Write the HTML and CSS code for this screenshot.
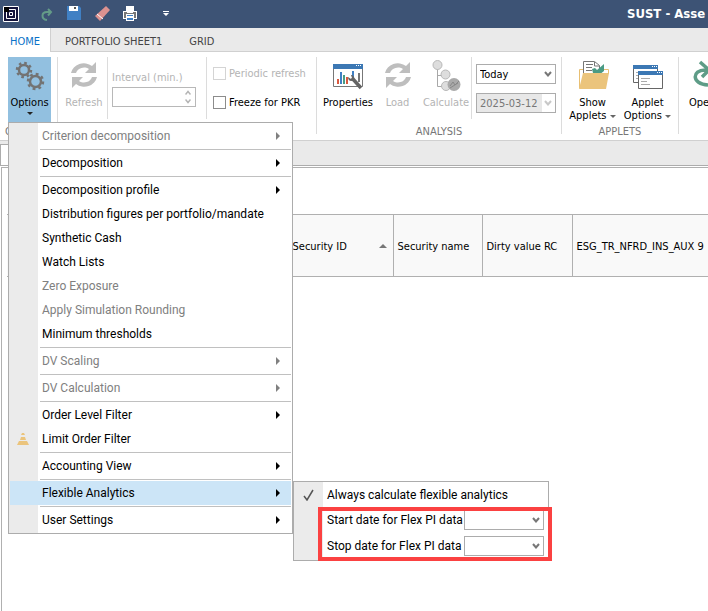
FILE: index.html
```html
<!DOCTYPE html>
<html lang="en">
<head>
<meta charset="utf-8">
<title>SUST</title>
<link rel="stylesheet" href="styles.css">
</head>
<body>
<svg class="defs" aria-hidden="true">
  <symbol id="refresh" viewBox="0 0 26 26">
    <path d="M0 11A13 12 0 0 1 21 4l4-4v11H14l4-4A8.500 8 0 0 0 5 11z"/>
    <path d="M26 15A13 12 0 0 1 5 22l-4 4V15h11l-4 4a8.500 8 0 0 0 13-4z"/>
  </symbol>
  <symbol id="chevron" viewBox="0 0 8 6"><path d="M1 1l3 3.500L7 1" fill="none" stroke="currentColor" stroke-width="2"/></symbol>
</svg>

<header class="titlebar">
  <svg class="logo" viewBox="0 0 16 16" aria-hidden="true"><path fill="#14143c" d="M0 0h16v16H0z"/><path fill="none" stroke="#fff" d="M.5.500h15v15H.5zM3.500 3.500h9v9h-9zM6.500 6.500h3v3h-3z"/><path fill="#000" d="M1 1h5v5H1z"/></svg>
  <button class="quick" aria-label="Redo"><svg viewBox="0 0 16 16"><path d="M9 14C3 13 3 6 9 6h4M10 3l3 3-3 3.500" fill="none" stroke="#649b88" stroke-width="2"/></svg></button>
  <button class="quick" aria-label="Save"><svg viewBox="0 0 16 16"><path fill="#4080c4" d="M1 0h12l2 2v12H1z"/><path fill="#fff" d="M3 0h9v5H3z"/><path fill="#555" d="M8 1h2v2H8z"/></svg></button>
  <button class="quick" aria-label="Erase"><svg viewBox="0 0 16 16"><path fill="#dc9290" d="M12 0l4 4-10 11-5-5z"/><path d="M3 8l6 5" stroke="#fff"/></svg></button>
  <button class="quick" aria-label="Print"><svg viewBox="0 0 14 16"><path fill="#fff" d="M3 0h8v5h3v8H0V5h3z"/><path fill="#777" d="M4 1h6v4H4zM1 6h12v6H1z"/><path fill="#fff" d="M4 1h6v6H4zM3 8h8v7H3z"/><path fill="#4080c4" d="M4 9h6v1H4zM4 12h6v2H4z"/></svg></button>
  <button class="quick quick-more" aria-label="Customize"><svg viewBox="0 0 6 6"><path fill="#fff" d="M0 0h6v1H0zM0 2h6L3 5z"/></svg></button>
  <h1 class="title">SUST - Asse</h1>
</header>

<nav class="tabs">
  <a class="tab tab-active" href="#home">HOME</a>
  <a class="tab" href="#sheet">PORTFOLIO SHEET1</a>
  <a class="tab" href="#grid">GRID</a>
</nav>

<section class="ribbon">
  <div class="group group-options">
    <div class="tools">
      <button class="tool tool-open">
        <svg class="icon" viewBox="0 0 32 32"><g fill="none" stroke="#737373"><circle cx="10" cy="10" r="5" stroke-width="2.500"/><circle cx="10" cy="10" r="7" stroke-width="2.500" stroke-dasharray="2.600 2.898"/><circle cx="21.500" cy="21.500" r="5.500" stroke-width="2.500"/><circle cx="21.500" cy="21.500" r="7.500" stroke-width="2.500" stroke-dasharray="2.800 3.090"/></g></svg>
        <span>Options</span><i class="drop"></i>
      </button>
    </div>
    <h2 class="caption">O</h2>
  </div>

  <div class="group group-refresh">
    <div class="tools">
      <button class="tool tool-refresh" disabled><svg class="icon icon-refresh"><use href="#refresh"/></svg><span>Refresh</span></button>
      <div class="part interval">
        <label for="interval">Interval (min.)</label>
        <div class="spin"><input id="interval" type="text" disabled><svg viewBox="0 0 6 14"><path d="M.5 4.500L3 1.500l2.500 3M.5 9.500l2.500 3 2.500-3" fill="none" stroke="#b4b4b4" stroke-width="1.500"/></svg></div>
      </div>
      <div class="part checks">
        <label class="check check-off"><input type="checkbox" disabled>Periodic refresh</label>
        <label class="check"><input type="checkbox">Freeze for PKR</label>
      </div>
    </div>
  </div>

  <div class="group">
    <div class="tools">
      <button class="tool tool-properties"><svg class="icon" viewBox="0 0 32 32"><path fill="#fff" stroke="#777" d="M1.500 5.500h29v21h-29z"/><path fill="#3c78b4" d="M1 4h30v5H1z"/><path fill="#fff" d="M24 5h1v1h-1zM26 5h1v1h-1zM28 5h1v1h-1z"/><path fill="#d9593f" d="M5 19h2v5H5zM14 17h2v7h-2z"/><path fill="#4080c4" d="M8 12h2v12H8zM20 11h2v6h-2z"/><path fill="#4a9b84" d="M11 15h2v9h-2z"/><path fill="#777" d="M26 13h2v9h-2z"/><path d="M20 18l9 10" stroke="#646464" stroke-width="3.500"/><path d="M16 17c0 4 3 5 6 3 1-3-1-5-3-5l1 3-1 1z" fill="#646464"/></svg><span>Properties</span></button>
      <button class="tool tool-load" disabled><svg class="icon icon-refresh"><use href="#refresh"/></svg><span>Load</span></button>
      <button class="tool tool-calculate" disabled><svg class="icon" viewBox="0 0 32 32"><path d="M7.500 6v20.500H17M7.500 15.500H13" fill="none" stroke="#a8a8a8"/><g fill="#ddd" stroke="#b8b8b8"><circle cx="7.500" cy="5" r="4.500"/><circle cx="15.500" cy="14.500" r="4.500"/><circle cx="16" cy="26" r="4.500"/></g><circle cx="24" cy="24.500" r="6.500" fill="#aaa"/><path d="M20 26l3-4 2 3 4-4M20 28l8-5" fill="none" stroke="#888"/></svg><span>Calculate</span></button>
      <div class="part dates">
        <div class="combo"><select aria-label="Period"><option>Today</option></select><svg><use href="#chevron"/></svg></div>
        <div class="combo combo-off"><select aria-label="Date" disabled><option>2025-03-12</option></select><svg><use href="#chevron"/></svg></div>
      </div>
    </div>
    <h2 class="caption">ANALYSIS</h2>
  </div>

  <div class="group group-applets">
    <div class="tools">
      <button class="tool tool-applet"><svg class="icon" viewBox="0 0 32 32"><path fill="#fff" stroke="#e8bf72" d="M2.500 28V9.500H6M23 9.500h8.500V14"/><path fill="#fff" stroke="#777" d="M6.500 15V1.500h11l5 4V15z"/><path d="M9 4.500h7M9 7.500h6M9 10.500h6M17.500 2v4h5" fill="none" stroke="#777"/><path fill="#4a9b84" d="M15 9l3-1 2 2 7-6v7l-5 4h-8l2-2z"/><path fill="#ebc47c" d="M6 13h26l-3 16H2z"/></svg><span>Show<br>Applets <i class="drop"></i></span></button>
      <button class="tool tool-applet"><svg class="icon" viewBox="0 0 32 32"><path fill="#fff" stroke="#666" d="M1.500 5.500h24v17h-24z"/><path fill="#3c78b4" d="M1 5h25v4H1z"/><path fill="#fff" d="M20 6h1v1h-1zM22 6h1v1h-1zM24 6h1v1h-1z"/><path d="M4 12.500h6M4 15.500h4M4 18.500h3" stroke="#aaa"/><path fill="#fff" stroke="#666" d="M6.500 11.500h24v17h-24z"/><path fill="#3c78b4" d="M6 11h25v4H6z"/><path fill="#fff" d="M25 12h1v1h-1zM27 12h1v1h-1zM29 12h1v1h-1z"/><path d="M9 18.500h9M9 21.500h6M9 24.500h9" stroke="#aaa"/></svg><span>Applet<br>Options <i class="drop"></i></span></button>
    </div>
    <h2 class="caption">APPLETS</h2>
  </div>

  <div class="group group-last">
    <div class="tools">
      <button class="tool tool-last"><svg class="icon" viewBox="0 0 32 32"><path d="M16 25C-1 24 0 10 13 10h6M8 2l9 8-7 7" fill="none" stroke="#5e9c87" stroke-width="3.500"/></svg><span>Ope</span></button>
    </div>
  </div>
</section>

<div class="sheetbar"><div class="sheet"></div></div>

<main class="document">
  <table class="grid">
    <colgroup><col class="col-first"><col class="col-id"><col class="col-name"><col class="col-value"><col></colgroup>
    <thead><tr><th></th><th><span class="sorted">Security ID<i></i></span></th><th>Security name</th><th>Dirty value RC</th><th>ESG_TR_NFRD_INS_AUX 9</th></tr></thead>
  </table>
</main>

<ul class="menu">
  <li><button class="item sub" disabled>Criterion decomposition</button></li>
  <li class="rule"><button class="item sub">Decomposition</button></li>
  <li class="rule"><button class="item sub">Decomposition profile</button></li>
  <li><button class="item">Distribution figures per portfolio/mandate</button></li>
  <li><button class="item">Synthetic Cash</button></li>
  <li><button class="item">Watch Lists</button></li>
  <li><button class="item" disabled>Zero Exposure</button></li>
  <li><button class="item" disabled>Apply Simulation Rounding</button></li>
  <li><button class="item">Minimum thresholds</button></li>
  <li class="rule"><button class="item sub" disabled>DV Scaling</button></li>
  <li class="rule"><button class="item sub" disabled>DV Calculation</button></li>
  <li class="rule"><button class="item sub">Order Level Filter</button></li>
  <li><button class="item"><svg class="mark cone" viewBox="0 0 12 12"><path fill="#ebc47c" d="M5 0h2l1 2H4zM4 4h4l1 3H3zM2 8h8l2 4H0z"/></svg>Limit Order Filter</button></li>
  <li class="rule"><button class="item sub">Accounting View</button></li>
  <li class="rule parent">
    <button class="item sub item-active">Flexible Analytics</button>
    <ul class="menu submenu">
      <li><button class="item"><svg class="mark" viewBox="0 0 12 12"><path d="M1 7l3 4 6-10" fill="none" stroke="#555" stroke-width="1.500"/></svg>Always calculate flexible analytics</button></li>
      <li class="field"><label for="start">Start date for Flex PI data</label><div class="combo"><select id="start"><option></option></select><svg><use href="#chevron"/></svg></div></li>
      <li class="field"><label for="stop">Stop date for Flex PI data</label><div class="combo"><select id="stop"><option></option></select><svg><use href="#chevron"/></svg></div></li>
      <li class="highlight" aria-hidden="true"></li>
    </ul>
  </li>
  <li class="rule"><button class="item sub">User Settings</button></li>
</ul>
</body>
</html>
```
FILE: styles.css
```css
* { box-sizing: border-box; }
body {
  margin: 0;
  height: 100vh;
  display: flex;
  flex-direction: column;
  position: relative;
  overflow: hidden;
  background: #fff;
  color: #000;
  font: 11px/13px Tahoma, "DejaVu Sans Condensed", "Open Sans", sans-serif;
  white-space: nowrap;
}
button, input, select { font: inherit; color: inherit; }
button { border: 0; padding: 0; background: none; }
ul { list-style: none; margin: 0; padding: 0; }
h1, h2 { margin: 0; font: inherit; }
svg { display: block; flex: none; }
.defs { position: absolute; width: 0; height: 0; }

.titlebar {
  flex: none;
  height: 28px;
  display: flex;
  align-items: center;
  gap: 12px;
  padding-left: 3px;
  background: #3d5375;
}
.logo { width: 16px; height: 16px; margin-right: 7px; }
.quick { width: 16px; display: flex; justify-content: center; }
.quick svg { width: 16px; height: 16px; }
.quick-more { margin-left: 8px; }
.quick-more svg { width: 6px; height: 6px; }
.title {
  margin-left: auto;
  width: 81px;
  overflow: hidden;
  color: #fff;
  font: bold 13px/16px Tahoma, "DejaVu Sans Condensed", sans-serif;
}

.tabs {
  flex: none;
  height: 24px;
  display: flex;
  background: #eaeaea;
  border-bottom: 1px solid #d0d0d0;
}
.tab { padding: 7px 14px 0 13px; color: #444; text-decoration: none; }
.tab-active {
  height: 24px;
  padding: 7px 10px 0 10px;
  margin-right: 1px;
  background: #fff;
  border-right: 1px solid #d0d0d0;
  color: #0a72c8;
}

.ribbon {
  flex: none;
  height: 89px;
  display: flex;
  padding-top: 5px;
  border-bottom: 1px solid #d0d0d0;
}
.group {
  flex: none;
  height: 77px;
  display: flex;
  flex-direction: column;
  padding: 0 5px;
  border-right: 1px solid #dcdcdc;
}
.group-options { padding-left: 8px; }
.group-options .tools { margin-right: 1px; }
.group-options .caption { text-align: left; margin-left: -3px; }
.group-refresh { padding-left: 3px; padding-right: 0; }
.group-applets { padding: 0 3px; }
.group-last { border: 0; padding: 0 0 0 10px; }
.tools { flex: none; display: flex; height: 67px; }
.caption { text-align: center; color: #777; line-height: 16px; }
.tool {
  display: flex;
  flex-direction: column;
  align-items: center;
  height: 65px;
  padding-top: 3px;
}
.tool:disabled { color: #b4b4b4; }
.icon { width: 32px; height: 32px; margin-bottom: 4px; }
.icon-refresh { width: 26px; height: 26px; margin: 2px 3px 8px; fill: #bebebe; }
.tool-open { width: 43px; background: #92c0e0; }
.tool-refresh { width: 46px; }
.tool-properties { width: 52px; }
.tool-load { width: 47px; }
.tool-calculate { width: 50px; }
.tool-applet { width: 55px; }
.tool-last { align-items: flex-start; }
.tool-last .icon { margin-left: 3px; }
.drop {
  display: inline-block;
  border: 3px solid transparent;
  border-top-color: #666;
  border-bottom: 0;
  vertical-align: middle;
}
.tool > .drop { margin-top: 3px; border-top-color: #222; }
.part { height: 62px; border-left: 1px solid #dcdcdc; }
.interval { width: 99px; padding: 14px 10px 0 4px; color: #b4b4b4; }
.spin {
  display: flex;
  align-items: center;
  height: 20px;
  margin-top: 3px;
  padding-right: 4px;
  border: 1px solid #b8b8b8;
}
.spin input { flex: 1; min-width: 0; height: 100%; border: 0; background: none; }
.spin svg { width: 6px; height: 14px; }
.checks {
  width: 110px;
  padding: 10px 0 0 6px;
  display: flex;
  flex-direction: column;
  gap: 16px;
}
.check { display: flex; align-items: center; gap: 3px; }
.check input {
  appearance: none;
  width: 13px;
  height: 13px;
  margin: 0;
  border: 1px solid #8c8c8c;
  background: #fff;
}
.check-off { color: #b4b4b4; }
.check-off input { border-color: #d4d4d4; }
.dates { padding: 7px 0 0 4px; display: flex; flex-direction: column; gap: 9px; }

.combo {
  width: 80px;
  height: 20px;
  display: grid;
  grid-template-columns: 1fr 11px;
  align-items: center;
  border: 1px solid #acacac;
  background: #fff;
}
.combo select {
  grid-area: 1 / 1 / 2 / 3;
  width: 100%;
  height: 18px;
  appearance: none;
  border: 0;
  padding: 0 0 0 3px;
  background: none;
}
.combo svg { grid-area: 1 / 2; width: 8px; height: 6px; color: #777; pointer-events: none; }
.combo-off { background: linear-gradient(90deg, #e8e8e8 65px, #fff 65px); }
.combo-off select { color: #777; opacity: 1; }
.combo-off svg { color: #c8c8c8; }

.sheetbar { flex: none; height: 25px; padding-top: 3px; background: #eaeaea; border-bottom: 1px solid #acacac; }
.sheet { width: 120px; height: 21px; background: #fff; border: 1px solid #acacac; border-bottom: 0; }
.document {
  flex: 1;
  margin: 1px 0 0 1px;
  padding: 46px 0 0 5px;
  border: solid #b0b0b0;
  border-width: 1px 0 0 1px;
}
.grid { width: 100%; table-layout: fixed; border-collapse: collapse; background: #f9f9f9; }
.grid th {
  height: 62px;
  padding: 1px 0 0 4px;
  border: solid #b0b0b0;
  border-width: 1px 1px 1px 0;
  text-align: left;
  font-weight: normal;
}
.grid th:last-child { border-right: 0; }
.col-first { width: 281px; }
.col-id { width: 105px; }
.col-name { width: 89px; }
.col-value { width: 90px; }
.sorted { display: flex; align-items: center; justify-content: space-between; padding-right: 6px; }
.sorted i { border: 4px solid transparent; border-bottom-color: #777; border-top: 0; }

.menu {
  position: absolute;
  left: 8px;
  top: 122px;
  width: 285px;
  padding: 1px;
  border: 1px solid #acacac;
  background: linear-gradient(90deg, #ebebeb 29px, #fff 29px);
  font: 12px/16px "Segoe UI", Roboto, "Open Sans", sans-serif;
}
.item {
  position: relative;
  display: flex;
  align-items: center;
  width: 100%;
  height: 24px;
  padding: 0 11px 0 32px;
  text-align: left;
}
.item:disabled { color: #808080; }
.item-active { background: #cce5f7; }
.sub::after {
  content: "";
  margin-left: auto;
  border: 4px solid transparent;
  border-left-color: currentColor;
  border-right: 0;
}
.rule::before {
  content: "";
  display: block;
  height: 1px;
  margin: 1px 0 1px 30px;
  background: #c0c0c0;
}
.mark { width: 12px; height: 12px; margin: 0 12px 0 -24px; }
.cone { margin: 0 13px 0 -25px; }
.parent { position: relative; }
.submenu { left: 283px; top: 2px; width: 256px; }
.field { display: flex; align-items: center; justify-content: space-between; height: 26px; padding: 0 3px 0 32px; }
.highlight {
  position: absolute;
  inset: 25px -4px -1px 24px;
  border: 4px solid #fb4141;
  pointer-events: none;
}
```
